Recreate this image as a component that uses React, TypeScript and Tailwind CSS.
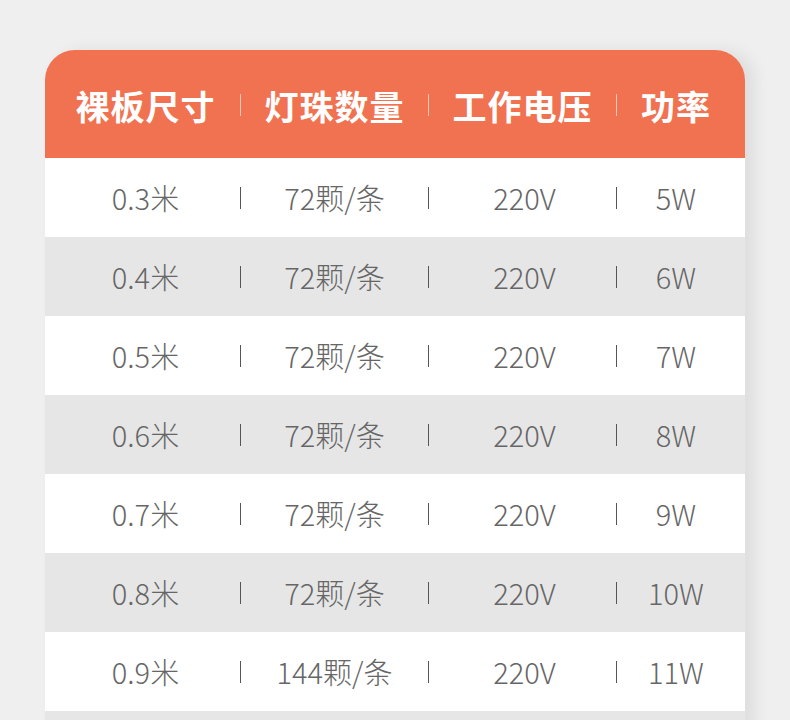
const rows = [
  ["0.3米", "72颗/条", "220V", "5W"],
  ["0.4米", "72颗/条", "220V", "6W"],
  ["0.5米", "72颗/条", "220V", "7W"],
  ["0.6米", "72颗/条", "220V", "8W"],
  ["0.7米", "72颗/条", "220V", "9W"],
  ["0.8米", "72颗/条", "220V", "10W"],
  ["0.9米", "144颗/条", "220V", "11W"],
];

const font = { fontFamily: '"Noto Sans CJK SC", "Noto Sans", sans-serif' };

function Row({ cells, header, gray }: { cells: string[]; header?: boolean; gray?: boolean }) {
  const divider = header ? (
    <span className="w-px h-[22px] bg-white/60" />
  ) : (
    <span className="w-px h-[22px] bg-[#555]" />
  );
  const cellCls = header
    ? "flex justify-center text-[34px] font-bold text-white tracking-[1px]"
    : "flex justify-center text-[29px] font-light text-[#666]";
  return (
    <div
      className={`flex items-center ${header ? "h-[108px] pt-[2px]" : "h-[79px]"} ${
        gray ? "bg-[#e6e6e6]" : header ? "" : "bg-white"
      }`}
    >
      <div className={`${cellCls} w-[195px] pl-[6px]`}>{cells[0]}</div>
      {divider}
      <div className={`${cellCls} w-[187px]`}>{cells[1]}</div>
      {divider}
      <div className={`${cellCls} w-[187px] ${header ? "" : "pl-[4px]"}`}>{cells[2]}</div>
      {divider}
      <div className={`${cellCls} flex-1 pr-[10px]`}>{cells[3]}</div>
    </div>
  );
}

export default function App() {
  return (
    <div className="h-[720px] w-[790px] overflow-hidden bg-[#efefef] pt-[50px] pl-[45px]" style={font}>
      <div className="w-[700px] rounded-t-[30px] overflow-hidden shadow-[10px_0_16px_rgba(0,0,0,0.07)]">
        <div className="bg-[#f17251]">
          <Row cells={["裸板尺寸", "灯珠数量", "工作电压", "功率"]} header />
        </div>
        {rows.map((r, i) => (
          <Row key={i} cells={r} gray={i % 2 === 1} />
        ))}
        <div className="h-[79px] bg-[#e6e6e6]" />
      </div>
    </div>
  );
}
